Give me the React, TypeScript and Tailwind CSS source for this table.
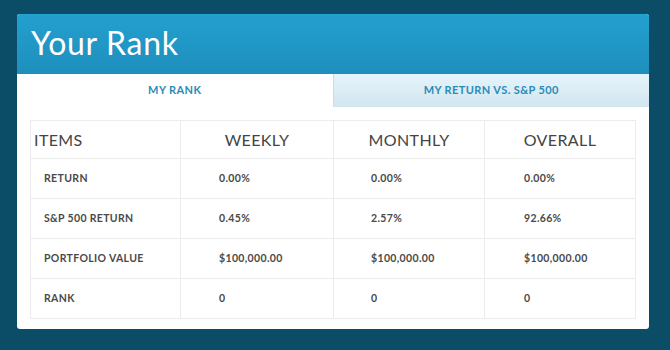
const rows = [
  { label: 'RETURN', weekly: '0.00%', monthly: '0.00%', overall: '0.00%' },
  { label: 'S&P 500 RETURN', weekly: '0.45%', monthly: '2.57%', overall: '92.66%' },
  { label: 'PORTFOLIO VALUE', weekly: '$100,000.00', monthly: '$100,000.00', overall: '$100,000.00' },
  { label: 'RANK', weekly: '0', monthly: '0', overall: '0' },
]

export default function App() {
  return (
    <div className="w-[670px] h-[350px] bg-[#0b4c66] pt-[14px] pl-[17px] font-['Lato',sans-serif]">
      <div className="w-[632px] h-[315px] bg-white rounded-[3px] overflow-hidden">
        {/* Header */}
        <div className="h-[60px] bg-gradient-to-b from-[#23a0cf] to-[#1e8fbd] flex items-center pl-[14px] pb-[3px]">
          <h1 className="text-white text-[32px] leading-none tracking-[0.7px]">Your Rank</h1>
        </div>

        {/* Tabs */}
        <div className="flex h-[33px]">
          <div className="flex-1 bg-white flex items-center justify-center text-[11px] font-bold text-[#2b8bb7] tracking-[0.4px]">
            MY RANK
          </div>
          <div className="flex-1 bg-gradient-to-b from-[#e4f4fc] to-[#d2e6ef] border-l border-[#c9dde7] flex items-center justify-center text-[11px] font-bold text-[#2b8bb7] tracking-[0.4px]">
            MY RETURN VS. S&amp;P 500
          </div>
        </div>

        {/* Table */}
        <div className="px-[13px] pt-[13px]">
          <div className="border border-[#ececec]">
            <div className="grid grid-cols-[149px_153px_151px_1fr] h-[37px] text-[16px] text-[#444] tracking-[0.4px]">
              <div className="flex items-center pl-[3px]">ITEMS</div>
              <div className="flex items-center justify-center border-l border-[#ececec]">WEEKLY</div>
              <div className="flex items-center justify-center border-l border-[#ececec]">MONTHLY</div>
              <div className="flex items-center justify-center border-l border-[#ececec]">OVERALL</div>
            </div>
            {rows.map((r) => (
              <div key={r.label} className="grid grid-cols-[149px_153px_151px_1fr] h-[40px] border-t border-[#ececec] text-[10.5px] font-bold text-[#4a4a4a] tracking-[0.35px]">
                <div className="flex items-center pl-[13px]">{r.label}</div>
                <div className="flex items-center pl-[38px] border-l border-[#ececec]">{r.weekly}</div>
                <div className="flex items-center pl-[37px] border-l border-[#ececec]">{r.monthly}</div>
                <div className="flex items-center pl-[39px] border-l border-[#ececec]">{r.overall}</div>
              </div>
            ))}
          </div>
        </div>
      </div>
    </div>
  )
}
